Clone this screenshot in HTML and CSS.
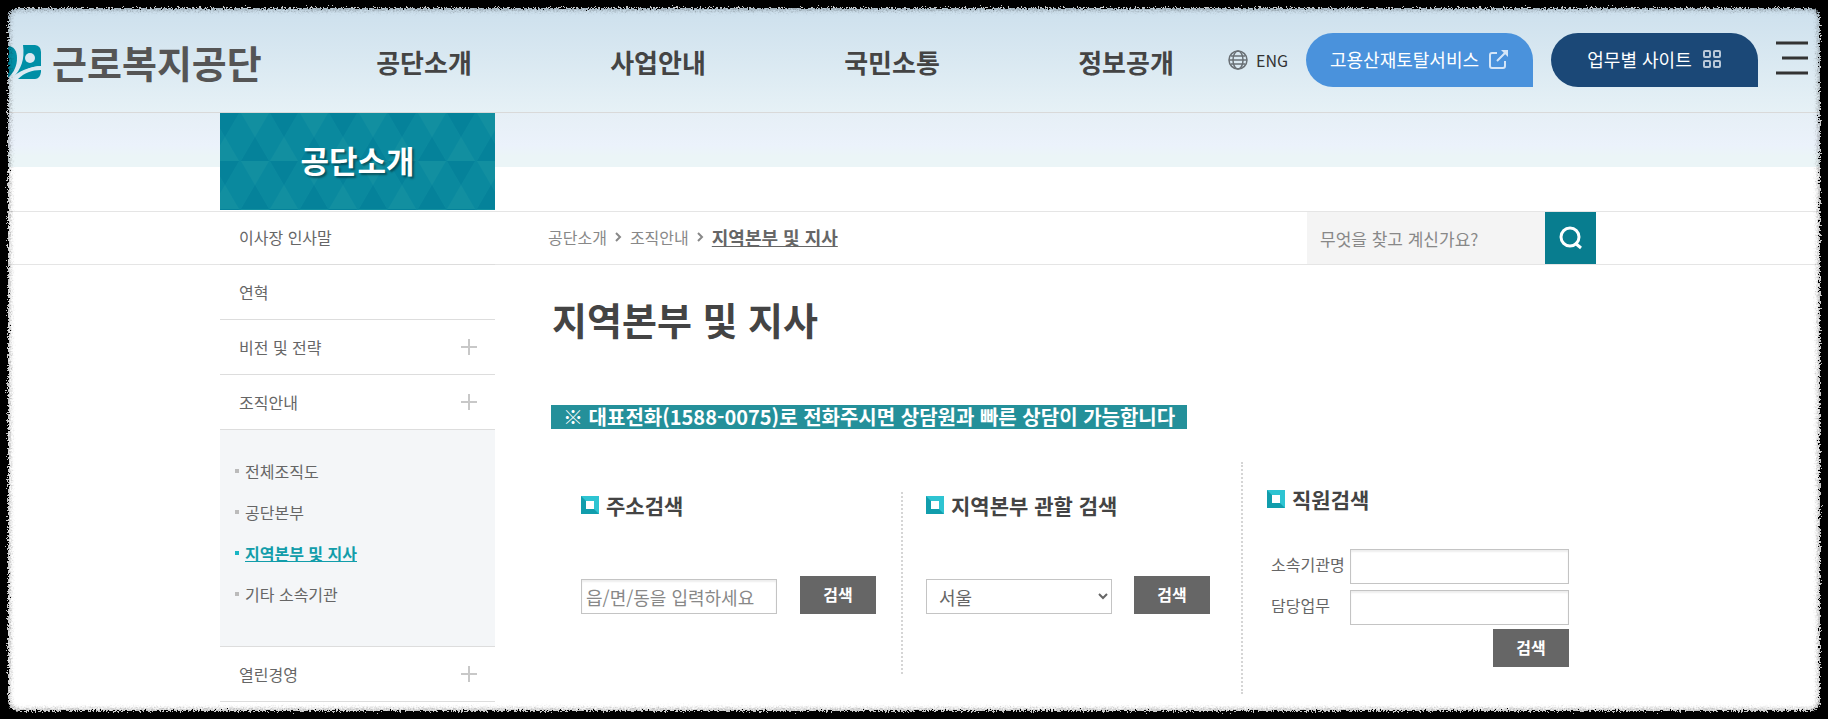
FILE: index.html
```html
<!DOCTYPE html>
<html lang="ko">
<head>
    <meta charset="UTF-8">
    <meta name="viewport" content="width=device-width, initial-scale=1.0">
    <title>지역본부 및 지사 | 근로복지공단</title>
    <link rel="stylesheet" href="styles.css">
</head>
<body>
    <header class="header">
        <a href="#" class="logo">
            <svg width="34" height="36" viewBox="0 0 34 36" aria-hidden="true">
                <path fill="#008fa6" d="M0 2C6 2 9 7 9 14C9 22 6 28 0 34Z"/>
                <path fill="#008fa6" d="M15 1H27Q33 2 33 8V22C23 22 13 27 5 34C13 25 17 16 15 1Z"/>
                <path fill="#008fa6" d="M10 35C16 29 24 26 33 26V28Q32 35 27 35Z"/>
                <path fill="none" stroke="#dce9f2" stroke-width="2" d="M4 35C10 29 22 23 34 23"/>
                <circle cx="22" cy="14" r="5" fill="#dce9f2"/>
            </svg>
            <span>근로복지공단</span>
        </a>
        <nav class="gnb">
            <a href="#">공단소개</a>
            <a href="#">사업안내</a>
            <a href="#">국민소통</a>
            <a href="#">정보공개</a>
        </nav>
        <div class="util">
            <a href="#" class="lang">
                <svg width="20" height="20" viewBox="0 0 20 20" fill="none" stroke="#6a7075" stroke-width="1.5" aria-hidden="true">
                    <circle cx="10" cy="10" r="9"/>
                    <ellipse cx="10" cy="10" rx="5" ry="9"/>
                    <path d="M1 10H19M3 6H17M3 14H17"/>
                </svg>
                ENG
            </a>
            <a href="#" class="pill pill-total">
                고용산재토탈서비스
                <svg width="20" height="20" viewBox="0 0 20 20" fill="none" stroke="#d5e6f8" stroke-width="2" aria-hidden="true">
                    <path d="M8 4H3Q1 4 1 6V17Q1 19 3 19H14Q16 19 16 17V12M8 12L18 2"/>
                    <path d="M12 1H19V8Z" fill="#d5e6f8" stroke="none"/>
                </svg>
            </a>
            <a href="#" class="pill pill-site">
                업무별 사이트
                <svg width="20" height="20" viewBox="0 0 20 20" fill="none" stroke="#b9c8d9" stroke-width="2" aria-hidden="true">
                    <rect x="2" y="2" width="6" height="6" rx="1"/>
                    <rect x="12" y="2" width="6" height="6" rx="1"/>
                    <rect x="2" y="12" width="6" height="6" rx="1"/>
                    <rect x="12" y="12" width="6" height="6" rx="1"/>
                </svg>
            </a>
            <button type="button" class="menu-btn" aria-label="전체메뉴">
                <svg width="32" height="34" viewBox="0 0 32 34" stroke="#333" stroke-width="3" aria-hidden="true">
                    <path d="M0 2H32M6 17H32M0 32H32"/>
                </svg>
            </button>
        </div>
    </header>
    <div class="band"></div>

    <div class="container">
        <aside class="side">
            <h2 class="side-title">
                <svg width="100%" height="100%" aria-hidden="true">
                    <defs>
                        <pattern id="tri" width="59" height="48" patternUnits="userSpaceOnUse">
                            <path fill="#128fa0" d="M21 0H49L35 24Z M5 24L19 48H-9Z M64 24L78 48H50Z"/>
                            <path fill="#05829a" d="M-9 0H19L5 24Z M50 0H78L64 24Z M35 24L49 48H21Z"/>
                        </pattern>
                    </defs>
                    <rect width="100%" height="100%" fill="url(#tri)"/>
                </svg>
                <span>공단소개</span>
            </h2>
            <ul class="lnb">
                <li><a href="#">이사장 인사말</a></li>
                <li><a href="#">연혁</a></li>
                <li><a href="#" class="more">비전 및 전략</a></li>
                <li>
                    <a href="#" class="more">조직안내</a>
                    <ul class="sub">
                        <li><a href="#">전체조직도</a></li>
                        <li><a href="#">공단본부</a></li>
                        <li class="on"><a href="#">지역본부 및 지사</a></li>
                        <li><a href="#">기타 소속기관</a></li>
                    </ul>
                </li>
                <li><a href="#" class="more">열린경영</a></li>
            </ul>
        </aside>

        <main class="content">
            <div class="location">
                <nav class="breadcrumb">
                    <a href="#">공단소개</a>
                    <svg width="7" height="10" viewBox="0 0 7 10" fill="none" stroke="#888" stroke-width="2"><path d="M1 1L5 5L1 9"/></svg>
                    <a href="#">조직안내</a>
                    <svg width="7" height="10" viewBox="0 0 7 10" fill="none" stroke="#888" stroke-width="2"><path d="M1 1L5 5L1 9"/></svg>
                    <a href="#" class="current">지역본부 및 지사</a>
                </nav>
                <form class="search">
                    <input type="text" placeholder="무엇을 찾고 계신가요?" aria-label="검색어">
                    <button type="submit" aria-label="검색">
                        <svg width="24" height="24" viewBox="0 0 24 24" fill="none" stroke="#fff" stroke-width="3" aria-hidden="true">
                            <circle cx="11" cy="11" r="9"/>
                            <path d="M16 17L22 22"/>
                        </svg>
                    </button>
                </form>
            </div>

            <h1>지역본부 및 지사</h1>
            <p class="notice"><strong>※ 대표전화(1588-0075)로 전화주시면 상담원과 빠른 상담이 가능합니다</strong></p>

            <div class="finder">
                <form class="box box-addr">
                    <h3>주소검색</h3>
                    <div class="row">
                        <input type="text" placeholder="읍/면/동을 입력하세요" aria-label="주소">
                        <button type="submit">검색</button>
                    </div>
                </form>
                <form class="box box-area">
                    <h3>지역본부 관할 검색</h3>
                    <div class="row">
                        <select aria-label="지역">
                            <option>서울</option>
                        </select>
                        <button type="submit">검색</button>
                    </div>
                </form>
                <form class="box box-staff">
                    <h3>직원검색</h3>
                    <div class="field">
                        <label for="dept">소속기관명</label>
                        <input type="text" id="dept">
                    </div>
                    <div class="field">
                        <label for="task">담당업무</label>
                        <input type="text" id="task">
                    </div>
                    <button type="submit">검색</button>
                </form>
            </div>
        </main>
    </div>

    <!-- torn paper edge -->
    <svg class="defs" width="0" height="0" aria-hidden="true">
        <filter id="rough" x="0" y="0" width="100%" height="100%">
            <feTurbulence type="fractalNoise" baseFrequency="0.6" numOctaves="2" seed="4" result="noise"/>
            <feDisplacementMap in="SourceGraphic" in2="noise" scale="8" xChannelSelector="R" yChannelSelector="G"/>
        </filter>
    </svg>
    <div class="edge"><div class="edge-line"></div></div>
</body>
</html>
```

FILE: styles.css
```css
*,
*::before,
*::after {
    box-sizing: border-box;
}
body {
    margin: 0;
    padding: 8px;
    min-height: 100vh;
    overflow: hidden;
    font-family: 'Noto Sans CJK KR', 'Noto Sans', sans-serif;
    font-size: 16px;
    color: #666;
    background: #fff;
}
a {
    color: inherit;
    text-decoration: none;
}
ul {
    margin: 0;
    padding: 0;
    list-style: none;
}
h1, h2, h3, p {
    margin: 0;
}
input, select, button {
    font-family: inherit;
}
button {
    padding: 0;
    border: none;
    cursor: pointer;
}

/* header */
.header {
    display: flex;
    align-items: center;
    height: 105px;
    padding-right: 12px;
    border-bottom: 1px solid #d9d9d9;
    background: linear-gradient(#cde0ed, #e6f1f6);
}
.logo {
    display: flex;
    align-items: center;
    gap: 10px;
    width: 299px;
    padding-top: 4px;
    font-size: 38px;
    font-weight: 700;
    line-height: 40px;
    color: #555;
}
.gnb {
    display: flex;
    flex: 1;
    padding-top: 4px;
}
.gnb a {
    flex: 1;
    text-align: center;
    font-size: 26px;
    font-weight: 700;
    line-height: 40px;
    color: #444;
}
.util {
    display: flex;
    align-items: center;
    margin-left: -15px;
}
.lang {
    display: flex;
    align-items: center;
    gap: 8px;
    margin-right: 18px;
    color: #333;
}
.pill {
    display: flex;
    align-items: center;
    justify-content: center;
    gap: 10px;
    height: 54px;
    margin-right: 18px;
    padding-bottom: 2px;
    border-radius: 27px 27px 0 27px;
    font-size: 18px;
    color: #fff;
}
.pill-total {
    width: 227px;
    background: #4a92dc;
}
.pill-site {
    width: 207px;
    background: #1b4877;
}
.menu-btn {
    display: flex;
    padding-bottom: 4px;
    background: none;
}
.band {
    height: 54px;
    background: linear-gradient(#e6eff6, #ebf2fb 60%, #ebf5f7 80%);
}

/* layout */
.container {
    display: flex;
    width: 1388px;
    margin: -54px auto 0;
    padding-right: 12px;
}
.container::before {
    content: "";
    position: absolute;
    left: 0;
    right: 0;
    top: 211px;
    height: 54px;
    border: 1px solid #e5e5e5;
    border-width: 1px 0;
}
.side {
    position: relative;
    width: 275px;
}
.side-title {
    display: grid;
    height: 97px;
    background: #0a899e;
    font-size: 31px;
    font-weight: 700;
    color: #fff;
    text-shadow: 2px 2px 2px rgba(0, 0, 0, 0.4);
}
.side-title svg,
.side-title span {
    grid-area: 1 / 1;
    min-height: 0;
}
.side-title span {
    align-self: center;
    padding-bottom: 4px;
    text-align: center;
}
.lnb > li {
    border-bottom: 1px solid #ddd;
}
.lnb > li > a {
    display: flex;
    align-items: center;
    justify-content: space-between;
    height: 54px;
    padding: 0 18px 0 19px;
}
.lnb .more::after {
    content: "";
    width: 16px;
    height: 16px;
    background:
        linear-gradient(#c8c8c8, #c8c8c8) center / 16px 2px no-repeat,
        linear-gradient(#c8c8c8, #c8c8c8) center / 2px 16px no-repeat;
}
.sub {
    height: 217px;
    padding: 20px 15px;
    border-top: 1px solid #ddd;
    background: #f4f6f8;
}
.sub li {
    display: flex;
    align-items: center;
    gap: 6px;
    height: 41px;
}
.sub li::before {
    content: "";
    width: 4px;
    height: 4px;
    background: #bbb;
}
.sub .on {
    color: #129daa;
    font-weight: 700;
}
.sub .on a {
    text-decoration: underline;
}
.sub .on::before {
    background: #19b5c4;
}
.content {
    position: relative;
    flex: 1;
    padding: 99px 0 0 53px;
}

/* breadcrumb + search */
.location {
    display: flex;
    justify-content: space-between;
    height: 54px;
}
.breadcrumb {
    display: flex;
    align-items: center;
    gap: 8px;
    height: 50px;
    color: #888;
}
.breadcrumb .current {
    font-size: 18px;
    font-weight: 700;
    color: #666;
    text-decoration: underline;
}
.search {
    display: flex;
    height: 52px;
}
.search input {
    width: 238px;
    padding: 0 13px;
    border: none;
    background: #f4f4f4;
    font-size: 17px;
}
.search button {
    display: flex;
    align-items: center;
    justify-content: center;
    width: 51px;
    background: #087d8f;
}
::placeholder {
    color: #888;
}

h1 {
    padding: 26px 0 0 4px;
    font-size: 38px;
    line-height: 54px;
    color: #444;
}
.notice {
    padding: 59px 0 0 3px;
    line-height: 24px;
}
.notice strong {
    display: inline-block;
    padding: 0 12px;
    background: #24909a;
    font-size: 20px;
    color: #fff;
}

/* search boxes */
.finder {
    display: flex;
    align-items: flex-end;
    margin-top: 32px;
    padding-left: 33px;
}
.box h3 {
    display: flex;
    align-items: center;
    gap: 7px;
    font-size: 21px;
    line-height: 26px;
    color: #444;
}
.box h3::before {
    content: "";
    width: 18px;
    height: 18px;
    border: 5px solid;
    border-color: #2ec4d2 #2ec4d2 #119dac #119dac;
    background: #fff;
}
.box input,
.box select {
    height: 35px;
    padding: 0 4px;
    border: 1px solid #c4c4c4;
    border-radius: 0;
    background: #fff;
    font-size: 18px;
    color: #666;
}
.box input {
    box-shadow: inset 0 2px 2px #eee;
}
.box button {
    width: 76px;
    height: 38px;
    padding-bottom: 2px;
    background: #666;
    font-size: 16px;
    font-weight: 700;
    color: #fff;
}
.row {
    display: flex;
    align-items: flex-end;
    justify-content: space-between;
    margin-top: 58px;
}
.box-addr,
.box-area {
    height: 182px;
    margin-bottom: 20px;
    padding-right: 25px;
    border-right: 2px dotted #d5d5d5;
}
.box-addr {
    width: 322px;
}
.box-addr input {
    width: 196px;
}
.box-area {
    width: 315px;
    margin-left: 23px;
    padding-right: 31px;
    border-right: none;
}
.box-area select {
    width: 186px;
    padding: 0 8px;
}
.box-staff {
    width: 328px;
    height: 232px;
    padding: 24px 0 0 24px;
    border-left: 2px dotted #d5d5d5;
}
.box-staff h3 {
    margin-bottom: 37px;
}
.field {
    display: flex;
    align-items: center;
    margin-bottom: 6px;
    padding-left: 4px;
}
.field label {
    width: 79px;
    padding-bottom: 6px;
}
.field input {
    flex: 1;
    min-width: 0;
}
.box-staff button {
    display: block;
    margin: -2px 0 0 auto;
}

/* page edge */
.defs {
    position: absolute;
}
.edge {
    position: fixed;
    inset: -20px;
    overflow: hidden;
    pointer-events: none;
    filter: url(#rough);
}
.edge-line {
    position: absolute;
    inset: 28px;
    border-radius: 10px;
    box-shadow: 0 0 0 30px #000, inset 0 0 5px 1px rgba(0, 0, 0, 0.4);
}
```
